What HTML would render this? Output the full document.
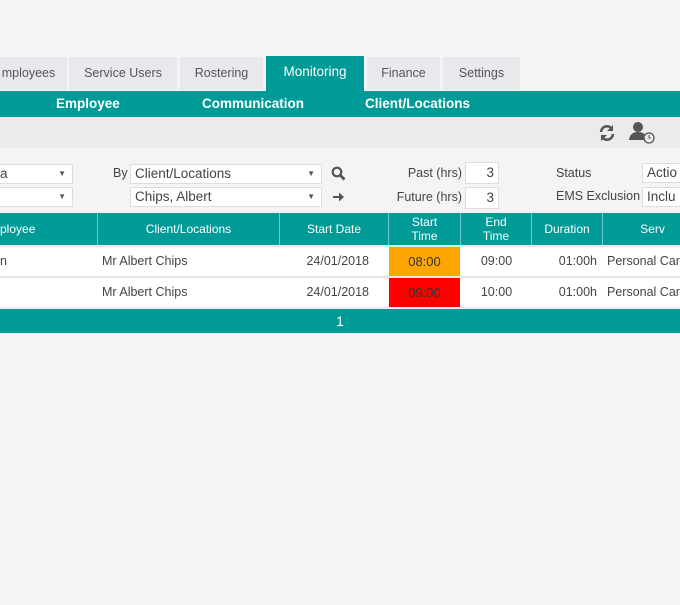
<!DOCTYPE html><html><head><style>
body{margin:0;width:680px;height:605px;background:#f4f4f4;font-family:"Liberation Sans",sans-serif;position:relative;overflow:hidden;color:#444;font-size:12.5px}
.a{position:absolute}
.tab{position:absolute;top:57px;height:33px;background:#e7e9ec;line-height:33px;text-align:center;color:#555;font-size:12.5px}
.sel{position:absolute;background:#fff;border:1px solid #ddd;height:20px;line-height:18px;box-sizing:border-box;padding-left:4px;font-size:13.5px;color:#444}
.dd:after{content:"▼";position:absolute;right:6px;font-size:8px;color:#555}
.th{position:absolute;top:213px;height:32px;background:#009a97;color:#fff;text-align:center;font-size:12px;border-right:1px solid #6cc;box-sizing:border-box;display:flex;align-items:center;justify-content:center;line-height:14px}
.td{position:absolute;height:29px;line-height:29px;background:#fff;font-size:12.5px;color:#555}
</style></head><body>
<div class="tab" style="left:-10px;width:77px">mployees</div>
<div class="tab" style="left:69px;width:108px">Service Users</div>
<div class="tab" style="left:180px;width:83px">Rostering</div>
<div class="tab" style="left:266px;top:56px;height:35px;width:98px;background:#009a97;color:#fff;font-size:13.5px;line-height:31px">Monitoring</div>
<div class="tab" style="left:367px;width:73px">Finance</div>
<div class="tab" style="left:443px;width:77px">Settings</div>
<div class="a" style="left:0;top:91px;width:680px;height:26px;background:#009a97;color:#fff;font-size:13.5px;line-height:26px;font-weight:bold">
<span class="a" style="left:56px">Employee</span><span class="a" style="left:202px">Communication</span><span class="a" style="left:365px">Client/Locations</span></div>
<div class="a" style="left:0;top:117px;width:680px;height:31px;background:#ebebeb"></div>
<svg class="a" style="left:598px;top:124px" width="18" height="18" viewBox="0 0 18 18"><path d="M3 8 A6 6 0 0 1 14 5" stroke="#555" stroke-width="2.5" fill="none"/><path d="M15 1v6h-6z" fill="#555"/><path d="M15 10 A6 6 0 0 1 4 13" stroke="#555" stroke-width="2.5" fill="none"/><path d="M3 17v-6h6z" fill="#555"/></svg>
<svg class="a" style="left:628px;top:121px" width="28" height="24"><circle cx="10" cy="6" r="5" fill="#555"/><path d="M1 19 Q2 11 10 11 Q16 11 18 15 L18 19Z" fill="#555"/><circle cx="21" cy="17" r="5" fill="#ebebeb" stroke="#555" stroke-width="1.3"/><path d="M21 14v3h2" stroke="#555" fill="none"/></svg>
<div class="sel dd" style="left:-5px;top:164px;width:78px">a</div>
<div class="sel dd" style="left:-5px;top:187px;width:78px"></div>
<div class="a" style="left:113px;top:166px">By</div>
<div class="sel dd" style="left:130px;top:164px;width:192px">Client/Locations</div>
<div class="sel dd" style="left:130px;top:187px;width:192px">Chips, Albert</div>
<svg class="a" style="left:331px;top:166px" width="15" height="15"><circle cx="6" cy="6" r="4.3" stroke="#555" stroke-width="2.2" fill="none"/><path d="M9 9l4.5 4.5" stroke="#555" stroke-width="2.8"/></svg>
<svg class="a" style="left:332px;top:191px" width="13" height="12"><path d="M1 5h6V1.5L12 6 7 10.5V7H1z" fill="#555"/></svg>
<div class="a" style="left:380px;top:166px;width:82px;text-align:right">Past (hrs)</div>
<div class="a" style="left:380px;top:190px;width:82px;text-align:right">Future (hrs)</div>
<div class="sel" style="left:465px;top:162px;width:34px;height:22px;line-height:20px;text-align:right;padding-right:4px">3</div>
<div class="sel" style="left:465px;top:187px;width:34px;height:22px;line-height:20px;text-align:right;padding-right:4px">3</div>
<div class="a" style="left:556px;top:166px">Status</div>
<div class="a" style="left:556px;top:189px">EMS Exclusion</div>
<div class="sel" style="left:642px;top:163px;width:45px">Actio</div>
<div class="sel" style="left:642px;top:187px;width:45px">Inclu</div>
<div class="th" style="left:0;width:98px;justify-content:flex-start">ployee</div>
<div class="th" style="left:98px;width:182px">Client/Locations</div>
<div class="th" style="left:280px;width:109px">Start Date</div>
<div class="th" style="left:389px;width:72px">Start<br>Time</div>
<div class="th" style="left:461px;width:71px">End<br>Time</div>
<div class="th" style="left:532px;width:71px">Duration</div>
<div class="th" style="left:603px;width:100px">Serv</div>
<div class="a" style="left:0;top:246px;width:680px;height:62px;background:#e5e5e5"></div>
<div class="td" style="left:0;top:247px;width:680px"></div>
<div class="td" style="left:0;top:278px;width:680px"></div>
<div class="a" style="left:0;top:247px;line-height:29px">n</div>
<div class="a" style="left:102px;top:247px;line-height:29px">Mr Albert Chips</div>
<div class="a" style="left:102px;top:278px;line-height:29px">Mr Albert Chips</div>
<div class="a" style="left:280px;top:247px;width:89px;text-align:right;line-height:29px">24/01/2018</div>
<div class="a" style="left:280px;top:278px;width:89px;text-align:right;line-height:29px">24/01/2018</div>
<div class="a" style="left:389px;top:247px;width:71px;height:29px;background:#ffa500;color:#333;text-align:center;line-height:29px;font-size:13px">08:00</div>
<div class="a" style="left:389px;top:278px;width:71px;height:29px;background:#f00;color:#333;text-align:center;line-height:29px;font-size:13px">09:00</div>
<div class="a" style="left:461px;top:247px;width:71px;text-align:center;line-height:29px">09:00</div>
<div class="a" style="left:461px;top:278px;width:71px;text-align:center;line-height:29px">10:00</div>
<div class="a" style="left:532px;top:247px;width:65px;text-align:right;line-height:29px">01:00h</div>
<div class="a" style="left:532px;top:278px;width:65px;text-align:right;line-height:29px">01:00h</div>
<div class="a" style="left:607px;top:247px;line-height:29px;white-space:nowrap">Personal Car</div>
<div class="a" style="left:607px;top:278px;line-height:29px;white-space:nowrap">Personal Car</div>
<div class="a" style="left:0;top:309px;width:680px;height:24px;background:#009a97;color:#fff;text-align:center;line-height:24px;font-size:14px">1</div>
</body></html>
